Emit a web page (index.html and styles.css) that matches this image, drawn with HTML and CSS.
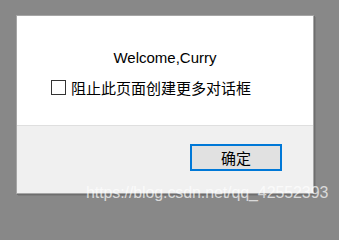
FILE: index.html
```html
<!DOCTYPE html>
<html lang="zh-CN">
<head>
<meta charset="utf-8">
<title>Dialog</title>
<link rel="stylesheet" href="styles.css">
</head>
<body>
<div class="stage">
  <div class="dialog">
    <div class="dialog-body">
      <div class="message">Welcome,Curry</div>
      <label class="check-row">
        <span class="check-box"></span>
        <span class="check-label">阻止此页面创建更多对话框</span>
      </label>
    </div>
    <div class="dialog-footer">
      <button class="btn-ok" type="button">确定</button>
    </div>
  </div>
  <div class="watermark">https://blog.csdn.net/qq_42552393</div>
</div>
</body>
</html>
```

FILE: styles.css
```css
html, body {
  margin: 0;
  padding: 0;
  background: #888888;
  width: 339px;
  height: 213px;
  overflow: hidden;
}

.stage {
  position: relative;
  width: 339px;
  height: 213px;
  padding: 15px 0 0 16px;
  box-sizing: border-box;
  font-family: "Liberation Sans", "Noto Sans CJK SC", sans-serif;
}

.dialog {
  width: 298px;
  height: 179px;
  box-sizing: border-box;
  border: 1px solid #a6a6a6;
  background: #ffffff;
  display: flex;
  flex-direction: column;
  box-shadow: 1px 1px 0 #6e6e6e, 2px 2px 0 #7c7c7c;
}

.dialog-body {
  height: 110px;
  box-sizing: border-box;
  padding-top: 33px;
  border-bottom: 1px solid #dfdfdf;
  background: #ffffff;
}

.message {
  font-size: 15px;
  line-height: 18px;
  color: #000000;
  text-align: center;
}

.check-row {
  display: flex;
  align-items: center;
  margin-top: 12px;
  padding-left: 34px;
  height: 17px;
}

.check-box {
  width: 13px;
  height: 13px;
  border: 1px solid #333333;
  background: #ffffff;
  flex: none;
}

.check-label {
  margin-left: 5px;
  font-family: "Noto Sans CJK SC", sans-serif;
  font-size: 15px;
  line-height: 17px;
  color: #000000;
}

.dialog-footer {
  flex: 1;
  background: #f0f0f0;
  display: flex;
  justify-content: flex-end;
  align-items: flex-start;
  padding: 18px 31px 0 0;
}

.btn-ok {
  width: 92px;
  height: 27px;
  box-sizing: border-box;
  border: 2px solid #0078d7;
  background: #e1e1e1;
  margin: 0;
  padding: 0;
  font-family: "Noto Sans CJK SC", sans-serif;
  font-size: 15px;
  line-height: 17px;
  color: #000000;
}

.watermark {
  position: absolute;
  left: 86px;
  top: 183px;
  font-family: "Liberation Sans", sans-serif;
  font-size: 16px;
  line-height: 20px;
  letter-spacing: -0.1px;
  color: rgba(255, 255, 255, 0.7);
  white-space: nowrap;
}
```
